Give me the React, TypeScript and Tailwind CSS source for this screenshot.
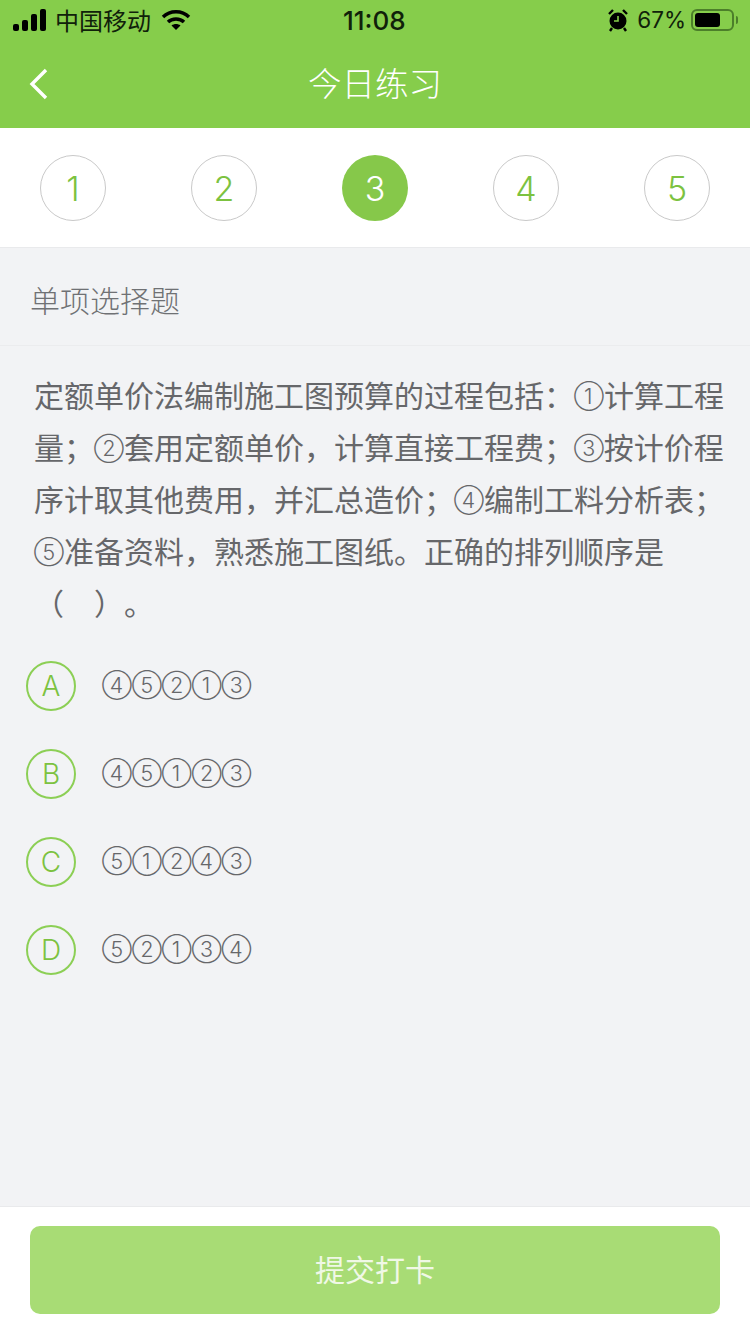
import type { ReactNode } from "react";

const cjk = "font-['Noto_Sans_CJK_SC',sans-serif]";
const num = "font-['Inter',sans-serif] font-light";

const steps = [1, 2, 3, 4, 5];
const options = [
  { key: "A", text: "④⑤②①③" },
  { key: "B", text: "④⑤①②③" },
  { key: "C", text: "⑤①②④③" },
  { key: "D", text: "⑤②①③④" },
];

// circled digits come from Inter, the CJK ones are too small
function Circled({ children }: { children: ReactNode }) {
  return <span className="align-[3px] font-['Inter'] text-[21.5px] font-light leading-none">{children}</span>;
}

function StatusBar() {
  return (
    <div className="relative flex h-10 items-center justify-between text-[24px] text-[#10210a]">
      <div className="flex items-center">
        <svg width="34" height="22" viewBox="0 0 34 22" className="ml-[13px]" fill="#000">
          <rect x="0" y="15" width="6" height="7" rx="2" />
          <rect x="9" y="11" width="6" height="11" rx="2" />
          <rect x="18" y="5" width="6" height="17" rx="2" />
          <rect x="27" y="0" width="6" height="22" rx="2" />
        </svg>
        <span className="ml-[8px] leading-none">中国移动</span>
        <svg width="30" height="22" viewBox="0 0 30 22" className="ml-[10px]" fill="none" stroke="#000" strokeWidth="3.4">
          <path d="M2 8 C9 1 21 1 28 8" />
          <path d="M7 13 C11 9 19 9 23 13" />
          <path d="M15 21 L10.5 16.5 C13 14.5 17 14.5 19.5 16.5 Z" fill="#000" stroke="none" />
        </svg>
      </div>
      <span className="absolute left-[343px] top-[8px] font-['Inter'] text-[26px] font-medium leading-none">11:08</span>
      <div className="flex items-center">
        <svg width="22" height="24" viewBox="0 0 22 24">
          <circle cx="11" cy="13" r="8.5" fill="#000" />
          <path d="M11 8 V13 H7" stroke="#86cd4b" strokeWidth="1.6" fill="none" />
          <path d="M2 6 L6 2 M20 6 L16 2 M5 20 L3 23 M17 20 L19 23" stroke="#000" strokeWidth="2.4" />
        </svg>
        <span className="ml-[8px] font-['Inter'] text-[22.5px] leading-none">67%</span>
        <div className="ml-[5px] flex h-[22px] w-[43px] items-center rounded-[6px] border-2 border-[#4c7f2a] px-[2px]">
          <div className="h-[14px] w-[25px] rounded-[3px] bg-black" />
        </div>
        <div className="ml-[2px] mr-[12px] h-[8px] w-[2px] rounded-r bg-[#4c7f2a]" />
      </div>
    </div>
  );
}

export default function App() {
  return (
    <div className={`${cjk} flex h-[1334px] w-[750px] flex-col bg-[#f2f3f5]`}>
      <header className="h-[128px] bg-[#86cd4b]">
        <StatusBar />
        <div className="relative flex h-[88px] items-center justify-center">
          <svg width="22" height="34" viewBox="0 0 22 34" className="absolute left-[28px] top-[27px]" fill="none" stroke="#fff" strokeWidth="3.4">
            <path d="M18 3 L4 17 L18 31" />
          </svg>
          <h1 className="pb-[4px] text-[33.5px] font-light leading-none text-white">今日练习</h1>
        </div>
      </header>

      <nav className="flex h-[120px] items-center justify-between border-b border-[#e9eaec] bg-white px-[40px] pt-[1px]">
        {steps.map((n) => (
          <div
            key={n}
            className={
              n === 3
                ? `${num} flex h-[66px] w-[66px] items-center justify-center rounded-full bg-[#86c84a] text-[34px] text-white`
                : `${num} flex h-[66px] w-[66px] items-center justify-center rounded-full border border-[#c9c9c9] text-[34px] text-[#7cc240]`
            }
          >
            {n}
          </div>
        ))}
      </nav>

      <div className="flex h-[98px] items-center border-b border-[#ebecee] pl-[30px] pt-[6px] text-[30px] font-light text-[#6f7174]">
        单项选择题
      </div>

      <main className="flex-1">
        <p className="pl-[34px] pr-[24px] pt-[22px] text-[30px] leading-[52px] text-[#66676a] [text-spacing-trim:space-all]">
          定额单价法编制施工图预算的过程包括：<Circled>①</Circled>计算工程量；<Circled>②</Circled>套用定额单价，计算直接工程费；<Circled>③</Circled>按计价程序计取其他费用，并汇总造价；<Circled>④</Circled>编制工料分析表；<Circled>⑤</Circled>准备资料，熟悉施工图纸。正确的排列顺序是（　）。
        </p>
        <ul className="mt-[33px] flex flex-col gap-[38px] pl-[26px]">
          {options.map((o) => (
            <li key={o.key} className="flex items-center">
              <span className={`${num} flex h-[50px] w-[50px] items-center justify-center rounded-full border-2 border-[#8ccf55] text-[28px] text-[#7cc240]`}>
                {o.key}
              </span>
              <span className="ml-[26px] font-['Inter'] text-[21.5px] font-light leading-none text-[#66676a]">{o.text}</span>
            </li>
          ))}
        </ul>
      </main>

      <footer className="h-[128px] border-t border-[#e9eaec] bg-white px-[30px] pt-[19px]">
        <button className="flex h-[88px] w-[690px] items-center justify-center rounded-[10px] bg-[#a8dc75] pb-[4px] text-[30px] text-[#f0f8e6]">
          提交打卡
        </button>
      </footer>
    </div>
  );
}
